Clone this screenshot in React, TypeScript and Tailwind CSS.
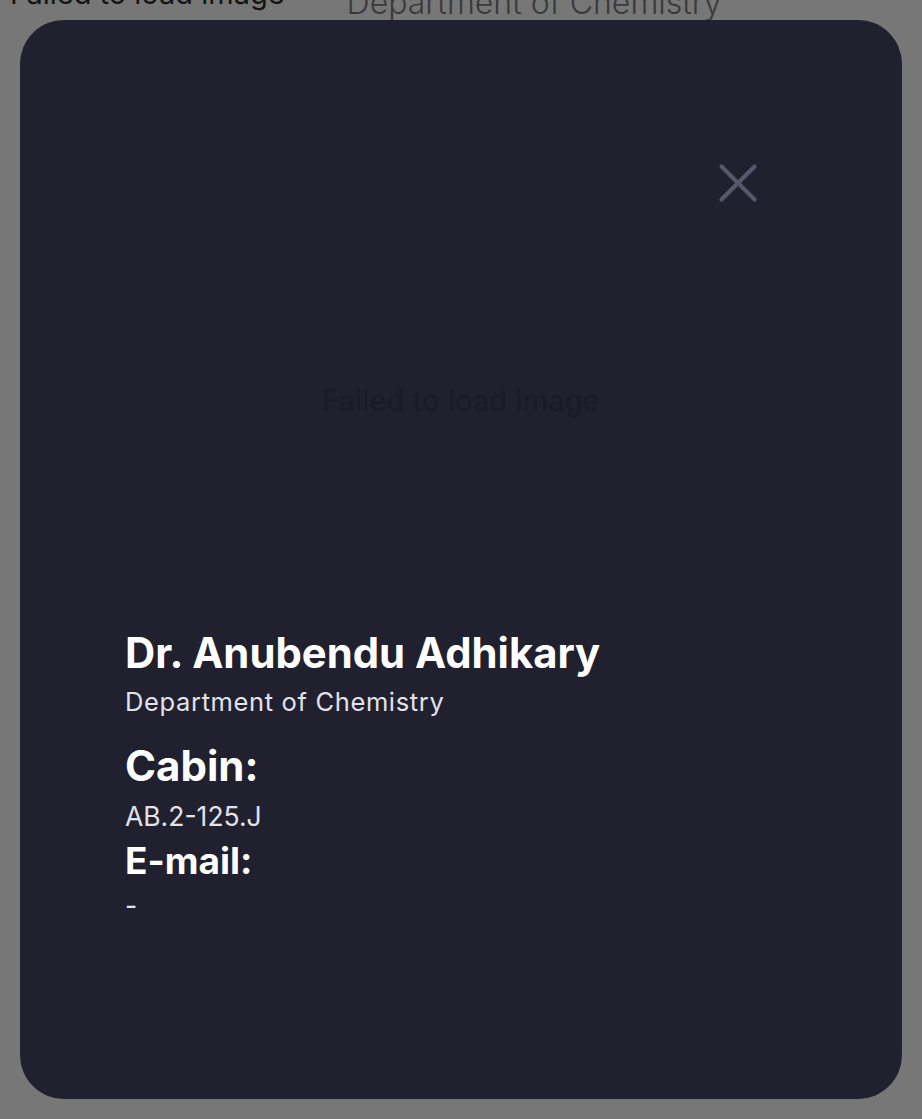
import { X } from "lucide-react"

export default function App() {
  return (
    <div className="w-[922px] h-[1119px] bg-[#777777] overflow-hidden font-['Inter',sans-serif]">
      {/* page behind the overlay */}
      <div className="h-[20px] flex items-end overflow-hidden">
        <span className="ml-[10px] mb-[12px] text-[29px] leading-none text-[#141414] whitespace-nowrap">
          Failed to load image
        </span>
        <span className="ml-[62px] mb-[1px] text-[32px] leading-none font-light text-[#3a3a3a] whitespace-nowrap">
          Department of Chemistry
        </span>
      </div>

      <div className="mx-[20px] h-[1079px] rounded-[44px] bg-[#20202e] px-[105px] pt-[130px]">
        <div className="flex justify-end pr-[26px]">
          <button className="text-[#57566a]">
            <X className="w-[66px] h-[66px]" strokeWidth={1.5} />
          </button>
        </div>

        <div className="h-[411px] pb-[42px] flex items-center justify-center">
          <p className="text-[29.3px] text-[#1b1b27]">Failed to load image</p>
        </div>

        <div className="flex flex-col text-white">
          <h1 className="text-[41.8px] font-bold leading-[52px]">Dr. Anubendu Adhikary</h1>
          <p className="mt-[7px] text-[25.5px] leading-[32px] text-[#e2e2ea] tracking-wide">Department of Chemistry</p>

          <h2 className="mt-[22px] text-[42px] font-bold leading-[52px]">Cabin:</h2>
          <p className="mt-[8px] text-[26.5px] leading-[32px] text-[#e2e2ea]">AB.2-125.J</p>

          <h2 className="mt-[6px] text-[37px] font-bold leading-[46px]">E-mail:</h2>
          <p className="mt-[5px] text-[26.5px] leading-[32px] text-[#e2e2ea]">-</p>
        </div>
      </div>
    </div>
  )
}
